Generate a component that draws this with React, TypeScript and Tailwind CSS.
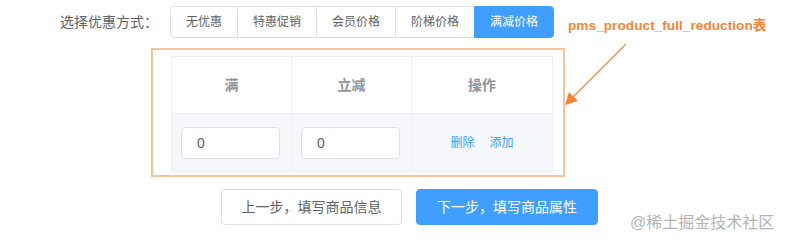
import { useState } from 'react';

const OPTIONS = ['无优惠', '特惠促销', '会员价格', '阶梯价格', '满减价格'];

export default function App() {
  const [active, setActive] = useState(4);

  return (
    <div className="relative w-[787px] h-[242px] bg-white font-['Liberation_Sans','Noto_Sans_CJK_SC',sans-serif] overflow-hidden">
      {/* discount type selector */}
      <div className="flex items-center pt-[6px]">
        <label className="w-[170px] pr-[12px] text-right text-[14px] text-[#606266]">选择优惠方式：</label>
        <div className="flex">
          {OPTIONS.map((opt, i) => (
            <button
              key={opt}
              onClick={() => setActive(i)}
              className={
                'h-[32px] px-[15px] text-[12px] border ' +
                (i === 0 ? 'rounded-l-[4px] ' : '-ml-px ') +
                (i === OPTIONS.length - 1 ? 'rounded-r-[4px] ' : '') +
                (i === active
                  ? 'bg-[#409eff] border-[#409eff] text-white relative'
                  : 'bg-white border-[#dcdfe6] text-[#606266]')
              }
            >
              {opt}
            </button>
          ))}
        </div>
      </div>

      {/* highlighted full-reduction table */}
      <div className="ml-[151px] mt-[10px] w-[414px] h-[129px] border-2 border-[#f9c29a] pl-[18px] pt-[6px]">
        <div className="w-[382px] border border-[#ebeef5]">
          <div className="flex h-[57px] border-b border-[#ebeef5] text-[14px] font-bold text-[#909399]">
            <div className="w-[120px] flex items-center justify-center border-r border-[#ebeef5]">满</div>
            <div className="w-[120px] flex items-center justify-center border-r border-[#ebeef5]">立减</div>
            <div className="flex-1 flex items-center justify-center">操作</div>
          </div>
          <div className="flex h-[57px] bg-[#f5f7fa]">
            <div className="w-[120px] flex items-center pl-[9px] border-r border-[#ebeef5]">
              <input
                defaultValue="0"
                className="w-[99px] h-[32px] px-[15px] bg-white border border-[#dcdfe6] rounded-[4px] text-[14px] text-[#606266] outline-none"
              />
            </div>
            <div className="w-[120px] flex items-center pl-[9px] border-r border-[#ebeef5]">
              <input
                defaultValue="0"
                className="w-[99px] h-[32px] px-[15px] bg-white border border-[#dcdfe6] rounded-[4px] text-[14px] text-[#606266] outline-none"
              />
            </div>
            <div className="flex-1 flex items-center justify-center gap-[15px] text-[12px] text-[#409eff]">
              <button>删除</button>
              <button>添加</button>
            </div>
          </div>
        </div>
      </div>

      {/* step buttons */}
      <div className="flex gap-[14px] ml-[221px] mt-[12px]">
        <button className="w-[181px] h-[36px] bg-white border border-[#dcdfe6] rounded-[4px] text-[14px] text-[#606266]">
          上一步，填写商品信息
        </button>
        <button className="w-[182px] h-[36px] bg-[#409eff] border border-[#409eff] rounded-[4px] text-[14px] text-white">
          下一步，填写商品属性
        </button>
      </div>

      {/* annotation */}
      <div className="absolute left-[568px] top-[16px] text-[13.7px] font-bold text-[#f5853a] whitespace-nowrap">
        pms_product_full_reduction表
      </div>
      <svg className="absolute left-[560px] top-[40px]" width="70" height="70" viewBox="0 0 70 70">
        <line x1="66" y1="4" x2="12" y2="58" stroke="#f5853a" strokeWidth="1.3" />
        <polygon points="5,65 9,52 18,61" fill="#f5853a" />
      </svg>

      <div className="absolute left-[630px] top-[211px] text-[16px] text-[#b4b4b4] whitespace-nowrap">
        @稀土掘金技术社区
      </div>
    </div>
  );
}
